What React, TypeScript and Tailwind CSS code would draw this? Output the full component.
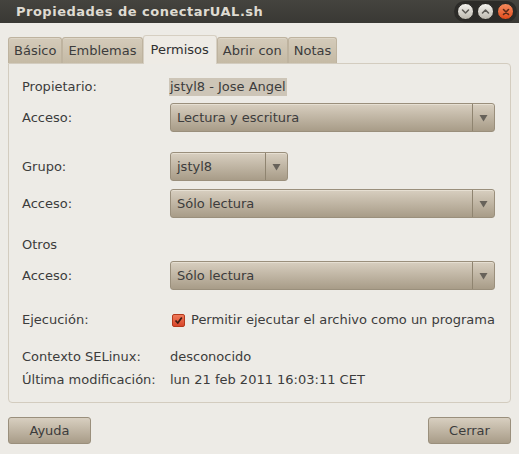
const font = "font-['DejaVu_Sans',sans-serif]"

const Arrow = () => (
  <svg width="9" height="8" viewBox="0 0 9 8">
    <path d="M0.5 1 L8.5 1 L4.5 7.5 Z" fill="#67625a" />
  </svg>
)

const Combo = ({ text, width }: { text: string; width: string }) => (
  <div
    className={`${width} h-[29px] flex rounded-[3px] border border-[#9a8f7c] bg-gradient-to-b from-[#d8cfc0] to-[#a89c88] shadow-[inset_0_1px_0_#e6dfd2]`}
  >
    <div className="flex-1 flex items-center pl-[6px] text-[#3c3c3c]">{text}</div>
    <div className="w-[22px] flex items-center justify-center border-l border-[#8f8470]">
      <Arrow />
    </div>
  </div>
)

const WinButton = ({ kind }: { kind: 'min' | 'max' | 'close' }) => {
  if (kind === 'close')
    return (
      <div className="w-[17px] h-[17px] rounded-full bg-gradient-to-b from-[#f58a5c] to-[#df4a17] border border-[#2a2926] flex items-center justify-center">
        <svg width="8" height="8" viewBox="0 0 8 8">
          <path d="M1.5 1.5 L6.5 6.5 M6.5 1.5 L1.5 6.5" stroke="#5a2a18" strokeWidth="1.6" strokeLinecap="round" />
        </svg>
      </div>
    )
  return (
    <div className="w-[17px] h-[17px] rounded-full bg-gradient-to-b from-[#f4f3ef] to-[#bcb8ae] border border-[#2a2926] flex items-center justify-center">
      <svg width="9" height="7" viewBox="0 0 9 7">
        <path
          d={kind === 'min' ? 'M1.5 2 L4.5 5 L7.5 2' : 'M1.5 5 L4.5 2 L7.5 5'}
          stroke="#5c5a55"
          strokeWidth="1.6"
          fill="none"
          strokeLinecap="round"
          strokeLinejoin="round"
        />
      </svg>
    </div>
  )
}

const Tab = ({ label, active }: { label: string; active?: boolean }) =>
  active ? (
    <div className="h-[29px] -mb-px px-[7px] flex items-center bg-[#eeebe5] border border-b-0 border-[#d6cfc2] rounded-t-[3px] text-[#303030] relative z-10">
      {label}
    </div>
  ) : (
    <div className="h-[26px] mt-[2px] px-[5px] flex items-center bg-gradient-to-b from-[#d4cbba] to-[#c5baa5] border border-b-0 border-[#beb39f] rounded-t-[3px] text-[#3c3c3c] shadow-[inset_0_1px_0_#ddd5c6]">
      {label}
    </div>
  )

const Label = ({ children }: { children: React.ReactNode }) => (
  <div className="w-[148px] shrink-0 text-[#3c3c3c]">{children}</div>
)

export default function App() {
  return (
    <div className={`w-[519px] h-[454px] bg-[#edebe6] flex flex-col text-[13px] leading-[18px] ${font}`}>
      {/* title bar */}
      <div className="h-[23px] bg-gradient-to-b from-[#45443f] to-[#393834] flex items-center justify-between pl-[16px] pr-[2px]">
        <span className="font-bold text-[#dfdbd2] tracking-[0.5px]">Propiedades de conectarUAL.sh</span>
        <div className="flex gap-[3px] items-center bg-[#2c2b28] rounded-full px-[3px] py-[2px]">
          <WinButton kind="min" />
          <WinButton kind="max" />
          <WinButton kind="close" />
        </div>
      </div>

      <div className="px-[8px] pt-[11px]">
        {/* tabs */}
        <div className="flex items-end h-[29px]">
          <Tab label="Básico" />
          <Tab label="Emblemas" />
          <Tab label="Permisos" active />
          <Tab label="Abrir con" />
          <Tab label="Notas" />
        </div>

        {/* panel */}
        <div className="border border-[#d3ccbf] rounded-b-[4px] rounded-tr-[4px] pl-[13px] pr-[15px] pt-[14px] pb-[13px]">
          <div className="flex h-[18px] items-center">
            <Label>Propietario:</Label>
            <span className="bg-[#cdc5b7] text-[#3c3c3c] -ml-[1px] pl-[1px] pr-[1px]">jstyl8 - Jose Angel</span>
          </div>
          <div className="flex items-center mt-[7px]">
            <Label>Acceso:</Label>
            <Combo text="Lectura y escritura" width="w-[327px]" />
          </div>
          <div className="flex items-center mt-[20px]">
            <Label>Grupo:</Label>
            <Combo text="jstyl8" width="w-[118px]" />
          </div>
          <div className="flex items-center mt-[8px]">
            <Label>Acceso:</Label>
            <Combo text="Sólo lectura" width="w-[327px]" />
          </div>
          <div className="h-[18px] mt-[18px] text-[#3c3c3c]">Otros</div>
          <div className="flex items-center mt-[7px]">
            <Label>Acceso:</Label>
            <Combo text="Sólo lectura" width="w-[327px]" />
          </div>
          <div className="flex h-[18px] items-center mt-[21px]">
            <Label>Ejecución:</Label>
            <div className="flex items-center gap-[6px] text-[#3c3c3c]">
              <div className="ml-[2px] w-[13px] h-[13px] rounded-[2px] border border-[#b4391c] bg-gradient-to-b from-[#f07a5a] to-[#d8452a] flex items-center justify-center">
                <svg width="9" height="9" viewBox="0 0 9 9">
                  <path d="M1.5 4.5 L3.8 7 L7.8 1.5" stroke="#3a1a12" strokeWidth="1.7" fill="none" />
                </svg>
              </div>
              <span>Permitir ejecutar el archivo como un programa</span>
            </div>
          </div>
          <div className="flex h-[18px] items-center mt-[19px]">
            <Label>Contexto SELinux:</Label>
            <span className="text-[#3c3c3c]">desconocido</span>
          </div>
          <div className="flex h-[18px] items-center mt-[5px]">
            <Label>Última modificación:</Label>
            <span className="text-[#3c3c3c]">lun 21 feb 2011 16:03:11 CET</span>
          </div>
        </div>

        {/* buttons */}
        <div className="flex justify-between mt-[14px]">
          <button className="w-[83px] h-[27px] rounded-[3px] border border-[#9a8f7c] bg-gradient-to-b from-[#d8cfc0] to-[#a89c88] text-[#3c3c3c]">
            Ayuda
          </button>
          <button className="w-[83px] h-[27px] rounded-[3px] border border-[#9a8f7c] bg-gradient-to-b from-[#d8cfc0] to-[#a89c88] text-[#3c3c3c]">
            Cerrar
          </button>
        </div>
      </div>
    </div>
  )
}
